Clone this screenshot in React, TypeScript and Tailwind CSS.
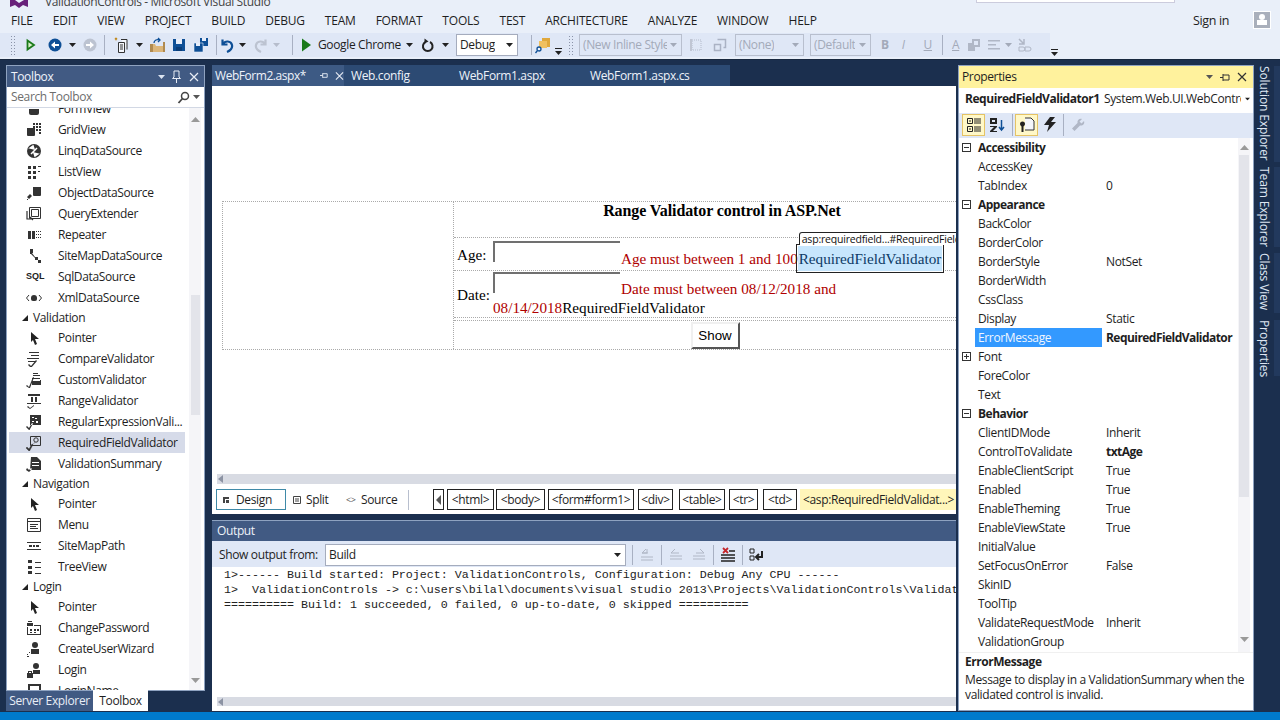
import React from "react";

const UI = "font-['Open_Sans','Noto_Sans',sans-serif] tracking-[-0.36px]";

type IconProps = { className?: string };

const Tri = ({ className = "" }: IconProps) => (
  <svg width="7" height="4" viewBox="0 0 7 4" className={className}>
    <path d="M0 0h7L3.500 4z" fill="currentColor" />
  </svg>
);

const Grip = ({ className = "" }: IconProps) => (
  <div className={`w-[5px] h-[20px] bg-[radial-gradient(#8a93a8_1px,transparent_1px)] bg-[length:3px_3px] ${className}`} />
);

const Sep = ({ className = "" }: IconProps) => <div className={`w-px h-[20px] bg-[#a8b0c2] ${className}`} />;

const Play = ({ className = "", outline = false }: IconProps & { outline?: boolean }) => (
  <svg width="12" height="14" viewBox="0 0 12 14" className={className}>
    {outline ? (
      <path d="M2.500 2.500l6.500 4.500-6.500 4.500z" fill="#d8f0c8" stroke="#1a7a1a" strokeWidth="1.800" />
    ) : (
      <path d="M2 0.500l9 6.500-9 6.500z" fill="#1a7a1a" />
    )}
  </svg>
);

const CircleArrow = ({ className = "", color = "#0e4f96", flip = false }: IconProps & { color?: string; flip?: boolean }) => (
  <svg width="14" height="14" viewBox="0 0 14 14" className={className}>
    <circle cx="7" cy="7" r="6.500" fill={color} />
    <path d={flip ? "M3 6h4V3.500L11 7l-4 3.500V8H3z" : "M11 6H7V3.500L3 7l4 3.500V8h4z"} fill="#fff" />
  </svg>
);

const FolderOpen = ({ className = "" }: IconProps) => (
  <svg width="17" height="16" viewBox="0 0 17 16" className={className}>
    <path d="M1 7h5l1 2h8v6H1z" fill="#dcb67a" />
    <path d="M1 7h3v8H1zM14 5h2v10h-2z" fill="#b08a50" />
    <path d="M5 6c0-3 3-4 6-3M9 1l2 2-2 2" stroke="#0e4f96" strokeWidth="1.300" fill="none" />
  </svg>
);

const Floppy = ({ className = "" }: IconProps) => (
  <svg width="14" height="14" viewBox="0 0 14 14" className={className}>
    <path d="M1 1h12v12H1z" fill="#0e4f96" />
    <path d="M4 1h6v5H4z" fill="#e8eefa" />
    <path d="M4 9h6v4H4z" fill="#0a3d78" />
  </svg>
);

const FloppyAll = ({ className = "" }: IconProps) => (
  <svg width="16" height="16" viewBox="0 0 16 16" className={className}>
    <path d="M7 1h8v8H7z" fill="#0e4f96" />
    <path d="M9 1h4v3H9z" fill="#e8eefa" />
    <path d="M1 6h9v9H1z" fill="#0e4f96" stroke="#e8eefa" strokeWidth="0.600" />
    <path d="M3 6h4v3H3z" fill="#e8eefa" />
  </svg>
);

const NewProject = ({ className = "" }: IconProps) => (
  <svg width="15" height="17" viewBox="0 0 15 17" className={className}>
    <path d="M4.500 5.500h6v10h-6zM7 2.500h6v10" fill="#f4f6fb" stroke="#333" />
    <path d="M1 1l2 2m0-2L1 3" stroke="#c08a20" strokeWidth="1.200" />
    <path d="M6 8h3M6 10h3M6 12h3" stroke="#333" />
  </svg>
);

const Undo = ({ className = "", color = "#0e4f96" }: IconProps & { color?: string }) => (
  <svg width="14" height="15" viewBox="0 0 14 15" className={className}>
    <path d="M2.500 1.500v5h5M3 6C5 2.500 11 2.500 12 7c.6 3-1.500 5.500-5 7" stroke={color} strokeWidth="2.200" fill="none" />
  </svg>
);

const Redo = ({ className = "" }: IconProps) => (
  <svg width="14" height="15" viewBox="0 0 14 15" className={className}>
    <path d="M11.500 1.500v5h-5M11 6C9 2.500 3 2.500 2 7c-.6 3 1.500 5.500 5 7" stroke="#bcc3d1" strokeWidth="2.200" fill="none" />
  </svg>
);

const Refresh = ({ className = "" }: IconProps) => (
  <svg width="14" height="15" viewBox="0 0 14 15" className={className}>
    <path d="M9 4a4.800 4.800 0 1 1-4.500 0" stroke="#222" strokeWidth="2" fill="none" />
    <path d="M3.500 0.500l4 3-4 2z" fill="#222" />
  </svg>
);

const FindFiles = ({ className = "" }: IconProps) => (
  <svg width="16" height="17" viewBox="0 0 16 17" className={className}>
    <path d="M7 1h8v9H7z" fill="#e0a83c" />
    <path d="M4 4h8v7H4z" fill="#f0c060" />
    <circle cx="4" cy="12" r="2" fill="#eef3fb" stroke="#0e4f96" strokeWidth="1.300" />
    <path d="M2.500 13.500L0.500 16" stroke="#0e4f96" strokeWidth="1.300" />
  </svg>
);

const Overflow = ({ className = "" }: IconProps) => (
  <svg width="7" height="7" viewBox="0 0 7 7" className={className}>
    <path d="M0 0h7v1H0zM0 3h7L3.500 7z" fill="#222" />
  </svg>
);

const StyleIcon = ({ className = "" }: IconProps) => (
  <svg width="14" height="14" viewBox="0 0 14 14" className={className}>
    <path d="M3 2h9v10H3z" fill="none" stroke="#b4bbcb" strokeDasharray="1 1" />
    <path d="M1 1h2v12H1z" fill="#c0c6d4" />
  </svg>
);

const CopyFrame = ({ className = "" }: IconProps) => (
  <svg width="14" height="14" viewBox="0 0 14 14" className={className}>
    <path d="M4.500 1.500h8v8h-2M1.500 6.500h6v6h-6z" fill="none" stroke="#aab2c4" strokeWidth="1.500" />
  </svg>
);

const Wrench = ({ className = "" }: IconProps) => (
  <svg width="14" height="14" viewBox="0 0 14 14" className={className}>
    <path d="M13 3l-2.500 2.500L8.500 3.500 11 1C8.500 0 6 2 6.500 5L1 10.500 3.500 13 9 7.500c3 .5 5-2 4-4.500z" fill="#b0b7c6" />
  </svg>
);

// toolbox glyphs, drawn roughly as in the VS 2013 toolbox
const glyphs: Record<string, React.ReactNode> = {
  form: <path d="M3 8h10v4a2 2 0 0 1-2 2H5a2 2 0 0 1-2-2z" fill="#333" />,
  grid: (
    <>
      <path d="M7 1h2v2H7zM10 1h2v2h-2zM13 1h2v2h-2zM7 4h2v2H7zM10 4h2v2h-2zM13 4h2v2h-2zM10 7h2v2h-2zM13 7h2v2h-2zM13 10h2v2h-2z" fill="#333" />
      <path d="M1 6h8v7a1 1 0 0 1-1 1H2a1 1 0 0 1-1-1z" fill="#333" />
    </>
  ),
  linq: (
    <>
      <circle cx="8" cy="8" r="7" fill="#333" />
      <path d="M4 5l3-2 1 3zM12 11l-3 2-1-3zM5 11l6-6" stroke="#fff" strokeWidth="1.500" fill="#fff" />
    </>
  ),
  list: <path d="M2 2h3v3H2zM7 2h3v3H7zM12 2h3v1h-3zM2 7h3v3H2zM7 7h3v3H7zM12 7h2v1h-2zM2 12h3v3H2zM7 12h3v3H7z" fill="#333" />,
  object: (
    <>
      <path d="M7 2h8v8a1 1 0 0 1-1 1H8a1 1 0 0 1-1-1z" fill="#333" />
      <path d="M1 12l3-3 2 2-3 3zM1 14h1v1H1z" fill="#333" />
    </>
  ),
  query: (
    <>
      <path d="M3.500 1.500h11v11h-11z" fill="none" stroke="#333" />
      <path d="M5.500 3.500h7v7h-7z" fill="none" stroke="#333" />
      <path d="M1 5v8h5M4 11l3 3" stroke="#333" fill="none" strokeWidth="1.200" />
    </>
  ),
  repeater: <path d="M2 4h3v8H2zM6 4h3v8H6zM10 4h1v1h-1zM12 4h1v1h-1zM14 4h1v1h-1zM10 7h1v1h-1zM12 7h1v1h-1zM14 7h1v1h-1zM10 10h1v1h-1zM12 10h1v1h-1zM14 10h1v1h-1z" fill="#333" />,
  sitemap: <path d="M4 1h3v4H6l3 4h3v3H9v-2L5 6H4zM12 12h3v3h-3z" fill="#333" />,
  xml: (
    <>
      <path d="M5 8a3 3 0 0 1 6 0v1a2 2 0 0 1-2 2H7a2 2 0 0 1-2-2z" fill="#333" />
      <path d="M3 5L0.500 8 3 11M13 5l2.500 3L13 11" stroke="#333" fill="none" />
    </>
  ),
  pointer: <path d="M5 2l8 7H9l2 5-2 1-2-5-2 2z" fill="#222" />,
  compare: <path d="M3 1h10v1H3zM5 4h8v1H5zM1 7h12v1H1zM2 10h7v1H2zM3 13l2 2 5-6 1 1-6 7-3-3z" fill="#333" />,
  custom: <path d="M7 1h5v1H7zM7 3h7v1H7zM6 6h8v1H6zM6 8h9v5H6V9h8V8zM1 13l2 2 4-10 1 .5L4 16H3l-3-2z" fill="#333" />,
  range: <path d="M2 1h12v2H2zM5 4h2v5H5zM9 4h2v5H9zM1 10h14v1H1zM2 13l2 2 4-3v1l-4 3-3-2z" fill="#333" />,
  regex: <path d="M4 1h11v10H4zM6 3v1h2V3zM9 4v1h2V4zM6 7v1h2V7zM10 7v2h2V7zM1 12l2 2 3-5 1 .5L3.500 16H3l-3-3z" fill="#333" fillRule="evenodd" />,
  required: (
    <>
      <path d="M4.500 1.500h10v9h-10z" fill="none" stroke="#333" />
      <circle cx="10" cy="5" r="2.200" fill="none" stroke="#333" />
      <path d="M9 7l-1.500 2M1 12l2 2 3-5 1 .5L3.500 16H3l-3-3z" fill="#333" stroke="#333" strokeWidth="0.400" />
    </>
  ),
  summary: <path d="M5 1h6l4 4v9H4zM6 6v1h7V6zM6 9v1h7V9zM1 12l2 2 2-2 1 1-3 3-3-2z" fill="#333" fillRule="evenodd" />,
  menu: (
    <>
      <path d="M1.500 1.500h13v13h-13z" fill="none" stroke="#333" />
      <path d="M1 4h14v1H1zM4 7h8v1H4zM4 9h6v1H4zM4 11h8v1H4z" fill="#333" />
    </>
  ),
  path: <path d="M1 4h14v1H1zM1 11h14v1H1zM3 7h3v2H3zM7 7h2v2H7zM10 7h3v2h-3z" fill="#333" />,
  tree: <path d="M2 1h4v3H2zM9 3h6v1H9zM2 7h4v3H2zM9 8h6v1H9zM2 12h4v3H2zM9 14h6v1H9z" fill="#333" />,
  password: <path d="M2 1h4v1H2zM1 3h6v3H1zM8 5h7v10H1V7h1v7h12V6H8zM4 9h2v2H4zM8 9h2v2H8zM11 9h2v2h-2zM4 12h2v1H4zM8 12h2v1H8z" fill="#333" />,
  wizard: (
    <>
      <circle cx="9" cy="4" r="3" fill="#333" />
      <path d="M5 8h8v5H5zM1 13h1v1H1zM3 11h1v1H3zM1 15h2v1H1z" fill="#333" />
    </>
  ),
  login: (
    <>
      <circle cx="10" cy="4" r="3" fill="#333" />
      <path d="M7 8h7v4H7zM1 11h6v5H1zM2 9h4v2H5v-1H3v1H2z" fill="#333" />
    </>
  ),
  loginname: <path d="M2 1h13v9H2zM4 3v5h9V3z" fill="#333" fillRule="evenodd" />,
};

const Glyph = ({ name }: { name: string }) =>
  name === "sql" ? (
    <span className="font-['Liberation_Sans',sans-serif] font-bold text-[9px] tracking-normal leading-none text-[#222] w-[16px] text-center">SQL</span>
  ) : (
    <svg width="16" height="16" viewBox="0 0 16 16">
      {glyphs[name]}
    </svg>
  );

const ToolRow = ({ icon, label, selected = false }: { icon: string; label: string; selected?: boolean }) => (
  <div className={`flex items-center h-[21px] ml-[2px] w-[176px] ${selected ? "bg-[#d6dbe9]" : ""}`}>
    <div className="w-[16px] ml-[17px] mr-[16px] flex justify-center">
      <Glyph name={icon} />
    </div>
    <span className="whitespace-nowrap">{label}</span>
  </div>
);

const GroupRow = ({ label }: { label: string }) => (
  <div className="flex items-center h-[19px] pl-[14px]">
    <svg width="8" height="8" viewBox="0 0 8 8" className="mr-[4px]">
      <path d="M7 1v6H1z" fill="#222" />
    </svg>
    <span>{label}</span>
  </div>
);

const PlusBox = ({ plus = false }: { plus?: boolean }) => (
  <div className="w-[9px] h-[9px] ml-[3px] mr-[7px] border border-[#333] relative shrink-0">
    <div className="absolute left-[1px] top-[3px] w-[5px] h-px bg-[#333]" />
    {plus && <div className="absolute left-[3px] top-[1px] w-px h-[5px] bg-[#333]" />}
  </div>
);

const PropGroup = ({ label }: { label: string }) => (
  <div className="flex items-center h-[19px]">
    <PlusBox />
    <span className="font-bold tracking-[-0.5px]">{label}</span>
  </div>
);

const PropRow = ({ name, value, bold = false, sel = false, plus = false }: { name: string; value?: string; bold?: boolean; sel?: boolean; plus?: boolean }) => (
  <div className="flex items-center h-[19px]">
    {plus ? <PlusBox plus /> : <div className="w-[19px] shrink-0" />}
    <div className={`-ml-[3px] pl-[3px] w-[127px] h-[19px] leading-[19px] whitespace-nowrap shrink-0 ${sel ? "bg-[#3399ff] text-[#f0f6ff]" : ""}`}>{name}</div>
    <div className={`ml-[4px] whitespace-nowrap ${bold ? "font-bold tracking-[-0.55px]" : ""}`}>{value}</div>
  </div>
);

const Crumb = ({ label, className = "" }: { label: string; className?: string }) => (
  <div className={`h-[21px] border border-[#222] flex items-center justify-center whitespace-nowrap bg-white shrink-0 ${className}`}>{label}</div>
);

const Combo = ({ label, className = "", grey = false }: { label: string; className?: string; grey?: boolean }) => (
  <div className={`h-[22px] border flex items-center justify-between pl-[3px] pr-[4px] shrink-0 ${grey ? "border-[#b8bfce] text-[#a3aab9] bg-[#dfe7f6]" : "border-[#a5acbd] bg-white"} ${className}`}>
    <span className="whitespace-nowrap overflow-hidden">{label}</span>
    <Tri className={grey ? "ml-[3px] text-[#a3aab9] shrink-0" : "ml-[3px] text-[#222] shrink-0"} />
  </div>
);

const SideTab = ({ label, className = "" }: { label: string; className?: string }) => (
  <div className={`flex w-full pl-[1px] ${className}`}>
    <div className="[writing-mode:vertical-rl] whitespace-nowrap tracking-[-0.1px]">{label}</div>
    <div className="ml-auto w-[6px] bg-[#22395d]" />
  </div>
);

export default function App() {
  const menu = ["FILE", "EDIT", "VIEW", "PROJECT", "BUILD", "DEBUG", "TEAM", "FORMAT", "TOOLS", "TEST", "ARCHITECTURE", "ANALYZE", "WINDOW", "HELP"];

  return (
    <div className={`w-[1280px] h-[720px] overflow-hidden flex flex-col bg-[#1b2f4e] text-[12px] text-[#1e1e1e] ${UI}`}>
      {/* title + menu */}
      <div className="h-[33px] bg-[#e9eff9] relative shrink-0">
        <svg width="24" height="8" viewBox="0 0 24 8" className="absolute left-[10px] top-0">
          <path d="M0 0h5l4 3 5-3h4v7l-5-2-4 3-4-3-5 2z" fill="#68217a" />
        </svg>
        <div className="absolute left-[45px] -top-[7px] whitespace-nowrap text-[#444]">ValidationControls - Microsoft Visual Studio</div>
        <div className="absolute left-[976px] -top-[8px] w-[199px] h-[11px] bg-white border border-[#ccd]" />
        <div className="flex items-center h-[33px] pt-[8px] pl-[11px] gap-[20px] tracking-[-0.2px]">
          {menu.map((m) => (
            <span key={m}>{m}</span>
          ))}
          <div className="flex-1" />
          <span className="mr-[4px] mt-[2px] text-[12.5px] tracking-[-0.36px]">Sign in</span>
          <div className="w-[18px] h-[18px] mr-[9px] mt-[-2px] bg-[#a9afbb] flex flex-col items-center pt-[2px] border border-white">
            <div className="w-[6px] h-[6px] rounded-full bg-white" />
            <div className="w-[10px] h-[5px] bg-white" />
          </div>
        </div>
      </div>

      {/* toolbar */}
      <div className="h-[26px] bg-[#e9eff9] flex items-center shrink-0 pb-[2px]">
        <div className="w-[1050px] h-[24px] bg-[#dfe7f6] flex items-center">
          <Grip className="ml-[10px]" />
          <Play className="ml-[10px]" outline />
          <CircleArrow className="ml-[11px]" />
          <Tri className="ml-[7px] text-[#222]" />
          <CircleArrow className="ml-[7px]" color="#bcc3d1" flip />
          <Sep className="ml-[7px]" />
          <NewProject className="ml-[9px]" />
          <Tri className="ml-[7px] text-[#222]" />
          <FolderOpen className="ml-[6px]" />
          <Floppy className="ml-[6px]" />
          <FloppyAll className="ml-[7px]" />
          <Sep className="ml-[7px]" />
          <Undo className="ml-[3px]" />
          <Tri className="ml-[5px] text-[#222]" />
          <Redo className="ml-[8px]" />
          <Tri className="ml-[5px] text-[#b6bdcc]" />
          <Sep className="ml-[12px]" />
          <Play className="ml-[7px]" />
          <span className="ml-[6px] whitespace-nowrap w-[84px]">Google Chrome</span>
          <Tri className="ml-[4px] text-[#222]" />
          <Refresh className="ml-[8px]" />
          <Tri className="ml-[7px] text-[#222]" />
          <Combo label="Debug" className="ml-[7px] w-[62px]" />
          <Sep className="ml-[13px]" />
          <FindFiles className="ml-[3px]" />
          <Overflow className="ml-[4px] mt-[13px]" />
          <Grip className="ml-[6px]" />
          <Combo grey label="(New Inline Style" className="ml-[6px] w-[103px]" />
          <StyleIcon className="ml-[7px]" />
          <CopyFrame className="ml-[10px]" />
          <Combo grey label="(None)" className="ml-[8px] w-[69px]" />
          <Combo grey label="(Default" className="ml-[6px] w-[61px]" />
          <span className="ml-[10px] font-bold text-[#a3aab9]">B</span>
          <span className="ml-[13px] italic text-[#a3aab9]">I</span>
          <span className="ml-[19px] underline text-[#a3aab9]">U</span>
          <Sep className="ml-[10px]" />
          <span className="ml-[9px] underline text-[#a3aab9]">A</span>
          <svg width="14" height="14" viewBox="0 0 14 14" className="ml-[8px]">
            <path d="M5 1h8v8H5zM1 5h7v8H1z" fill="#b0b7c6" />
            <path d="M7 3h4v4H7z" fill="#dfe7f6" />
          </svg>
          <svg width="14" height="14" viewBox="0 0 14 14" className="ml-[6px]">
            <path d="M1 2h12v1.500H1zM1 6h8v1.500H1zM1 10h12v1.500H1z" fill="#b0b7c6" />
          </svg>
          <Tri className="ml-[4px] text-[#a3aab9]" />
          <svg width="15" height="15" viewBox="0 0 15 15" className="ml-[5px]">
            <path d="M2 1l5 5M7 1v5H2" stroke="#b0b7c6" fill="none" strokeWidth="1.500" />
            <path d="M2 9h4a2 2 0 0 1 0 4H2zM8 9h4a2 2 0 0 1 0 4H8z" stroke="#b0b7c6" fill="none" />
          </svg>
        </div>
        <Overflow className="ml-[1px] mt-[14px]" />
      </div>

      {/* body */}
      <div className="flex-1 flex min-h-0 pt-[5px] bg-[#1b2f4e] border-t border-[#18283f]">
        {/* toolbox */}
        <div className="w-[199px] ml-[6px] shrink-0 flex flex-col h-[646px]">
          <div className="flex-1 flex flex-col min-h-0 border border-[#8ea2c0] overflow-hidden bg-white">
            <div className="h-[21px] bg-[#415a83] text-[#f0f4fb] flex items-center pl-[4px] shrink-0">
              <span>Toolbox</span>
              <Tri className="ml-auto text-[#dce4f1]" />
              <svg width="11" height="13" viewBox="0 0 11 13" className="ml-[6px]">
                <path d="M3 1h5v6l1.500 1.500h-8L3 7zM5.500 8.500V13" stroke="#e8edf6" fill="none" />
              </svg>
              <svg width="10" height="10" viewBox="0 0 10 10" className="ml-[7px] mr-[5px]">
                <path d="M1 1l8 8M9 1L1 9" stroke="#e8edf6" strokeWidth="1.200" />
              </svg>
            </div>
            <div className="h-[21px] flex items-center pl-[4px] text-[#6d6d6d] border-b border-[#d2d8e4] shrink-0">
              <span>Search Toolbox</span>
              <svg width="13" height="13" viewBox="0 0 13 13" className="ml-auto">
                <circle cx="8" cy="5" r="3.500" fill="none" stroke="#444" strokeWidth="1.500" />
                <path d="M5.500 7.500L1.500 12" stroke="#444" strokeWidth="1.800" />
              </svg>
              <Tri className="ml-[3px] mr-[4px] text-[#555]" />
            </div>
            <div className="flex-1 flex min-h-0">
              <div className="w-[180px] shrink-0 overflow-hidden">
                <div className="h-[11px] overflow-hidden">
                  <div className="-mt-[10px]">
                    <ToolRow icon="form" label="FormView" />
                  </div>
                </div>
                <ToolRow icon="grid" label="GridView" />
                <ToolRow icon="linq" label="LinqDataSource" />
                <ToolRow icon="list" label="ListView" />
                <ToolRow icon="object" label="ObjectDataSource" />
                <ToolRow icon="query" label="QueryExtender" />
                <ToolRow icon="repeater" label="Repeater" />
                <ToolRow icon="sitemap" label="SiteMapDataSource" />
                <ToolRow icon="sql" label="SqlDataSource" />
                <ToolRow icon="xml" label="XmlDataSource" />
                <GroupRow label="Validation" />
                <ToolRow icon="pointer" label="Pointer" />
                <ToolRow icon="compare" label="CompareValidator" />
                <ToolRow icon="custom" label="CustomValidator" />
                <ToolRow icon="range" label="RangeValidator" />
                <ToolRow icon="regex" label="RegularExpressionVali..." />
                <ToolRow icon="required" label="RequiredFieldValidator" selected />
                <ToolRow icon="summary" label="ValidationSummary" />
                <GroupRow label="Navigation" />
                <ToolRow icon="pointer" label="Pointer" />
                <ToolRow icon="menu" label="Menu" />
                <ToolRow icon="path" label="SiteMapPath" />
                <ToolRow icon="tree" label="TreeView" />
                <GroupRow label="Login" />
                <ToolRow icon="pointer" label="Pointer" />
                <ToolRow icon="password" label="ChangePassword" />
                <ToolRow icon="wizard" label="CreateUserWizard" />
                <ToolRow icon="login" label="Login" />
                <ToolRow icon="loginname" label="LoginName" />
              </div>
              <div className="w-[12px] ml-[2px] bg-[#f5f5f8] flex flex-col items-center relative">
                <svg width="9" height="5" viewBox="0 0 9 5" className="mt-[9px]">
                  <path d="M4.500 0L9 5H0z" fill="#999" />
                </svg>
                <div className="absolute left-[2px] top-[187px] w-[9px] h-[120px] bg-[#e3e4ea]" />
                <svg width="9" height="5" viewBox="0 0 9 5" className="mt-auto mb-[7px]">
                  <path d="M4.500 5L9 0H0z" fill="#999" />
                </svg>
              </div>
            </div>
          </div>
          <div className="flex h-[21px] shrink-0 -mt-px">
            <div className="w-[87px] bg-[#415a83] text-[#e8edf6] flex items-center justify-center mt-[1px] whitespace-nowrap">Server Explorer</div>
            <div className="w-[55px] bg-white flex items-center justify-center whitespace-nowrap">Toolbox</div>
          </div>
        </div>

        {/* center */}
        <div className="w-[744px] ml-[7px] shrink-0 flex flex-col">
          <div className="h-[21px] flex items-center text-[#eef2fa] shrink-0">
            <div className="w-[132px] h-full bg-[#3d5a84] flex items-center pl-[3px]">
              <span className="w-[92px] whitespace-nowrap tracking-[-0.45px]">WebForm2.aspx*</span>
              <svg width="9" height="9" viewBox="0 0 9 9" className="ml-[14px]">
                <path d="M3 2v5M3 4.500H0M3 2.500h5v4H3" stroke="#e8edf6" fill="none" />
              </svg>
              <svg width="10" height="10" viewBox="0 0 10 10" className="ml-[7px]">
                <path d="M1 1l8 8M9 1L1 9" stroke="#e8edf6" strokeWidth="1.200" />
              </svg>
            </div>
            <div className="w-[386px] h-full bg-[#2c4a73] flex items-center whitespace-nowrap">
              <span className="ml-[7px] w-[61px]">Web.config</span>
              <span className="ml-[47px] w-[85px]">WebForm1.aspx</span>
              <span className="ml-[46px]">WebForm1.aspx.cs</span>
            </div>
          </div>

          {/* design surface */}
          <div className="h-[388px] bg-white shrink-0 pt-[115px] pl-[10px] overflow-hidden">
            <div className="flex w-[760px] h-[149px] border border-dotted border-[#aaa] font-['Liberation_Serif',serif] text-[15.2px] tracking-normal leading-[19px] text-black">
              <div className="w-[231px] shrink-0 border-r border-dotted border-[#aaa]" />
              <div className="flex-1 flex flex-col">
                <div className="h-[37px] w-[536px] text-center font-bold border-b border-dotted border-[#aaa] text-[16px] tracking-[-0.1px] leading-[18px]">Range Validator control in ASP.Net</div>
                <div className="h-[32px] flex items-center border-b border-dotted border-[#aaa] mt-px pl-[3px]">
                  <span className="w-[36px] shrink-0">Age:</span>
                  <div className="relative whitespace-nowrap mt-[3px]">
                    <span className="inline-block w-[127px] h-[21px] border-t-2 border-l-2 border-[#707070] align-[2px]" />
                    <span className="text-[#b00000] ml-px">Age must between 1 and 100</span>
                    <span className="relative inline-block bg-[#c7e6fd] text-[#0d3a66] outline-1 outline-[#222] outline-offset-[1px] py-[3px] px-[1px]">
                      RequiredFieldValidator
                      <span className="absolute left-[1px] -top-[14px] h-[13px] w-[158px] overflow-hidden bg-white border border-[#222] border-b-0 rounded-tl-[3px] font-['Open_Sans',sans-serif] text-[10.5px] tracking-[-0.2px] leading-[12px] pl-[2px] text-[#111] whitespace-nowrap">asp:requiredfield...#RequiredFieldValidator1</span>
                    </span>
                  </div>
                </div>
                <div className="h-[48px] flex items-center border-b border-dotted border-[#aaa] mt-px pl-[3px]">
                  <span className="w-[36px] shrink-0 mt-[1px]">Date:</span>
                  <div className="w-[352px]">
                    <span className="inline-block w-[127px] h-[21px] border-t-2 border-l-2 border-[#707070] align-[1px]" />
                    <span className="text-[#b00000] ml-px">Date must between 08/12/2018 and 08/14/2018</span>
                    <span>RequiredFieldValidator</span>
                  </div>
                </div>
                <div className="flex-1 mt-[2px] w-[522px] flex justify-center items-start border-t border-dotted border-[#aaa]">
                  <div className="w-[49px] h-[27px] mt-px border-2 border-[#f0f0f0] border-r-[#555] border-b-[#555] flex items-center justify-center font-['Liberation_Sans',sans-serif] text-[13.33px]">Show</div>
                </div>
              </div>
            </div>
          </div>

          {/* design bar */}
          <div className="bg-white shrink-0 h-[40px] flex flex-col">
            <div className="h-[10px] ml-[5px] flex items-center bg-[#d8dbe3] shrink-0">
              <div className="w-0 h-0 border-y-[4px] border-y-transparent border-r-[5px] border-r-[#8c93a3] ml-[1px]" />
            </div>
            <div className="flex items-center h-[21px] mt-[5px] pl-[4px]">
              <div className="w-[70px] h-[21px] border border-[#3f8aa8] flex items-center pl-[5px] shrink-0">
                <svg width="8" height="8" viewBox="0 0 8 8" className="mr-[6px]">
                  <path d="M1 1h6v2H3v4H1zM4 4h3v3H4z" fill="#444" />
                </svg>
                <span>Design</span>
              </div>
              <svg width="8" height="8" viewBox="0 0 8 8" className="ml-[7px] shrink-0">
                <path d="M.5.500h7v7h-7zM2 3h4M2 5h4" stroke="#444" fill="none" />
              </svg>
              <span className="ml-[5px] w-[24px] shrink-0">Split</span>
              <span className="ml-[16px] w-[10px] text-[9px] text-[#555] shrink-0">&lt;&gt;</span>
              <span className="ml-[5px] w-[37px] shrink-0">Source</span>
              <div className="w-px h-[20px] bg-[#b8bfce] ml-[10px] shrink-0" />
              <div className="ml-[24px] w-[11px] h-[21px] border border-[#222] flex items-center justify-center shrink-0">
                <div className="w-0 h-0 border-y-[5px] border-y-transparent border-r-[5px] border-r-[#555]" />
              </div>
              <Crumb label="<html>" className="ml-[3px] w-[47px]" />
              <Crumb label="<body>" className="ml-[2px] w-[49px]" />
              <Crumb label="<form#form1>" className="ml-[3px] w-[86px]" />
              <Crumb label="<div>" className="ml-[4px] w-[35px]" />
              <Crumb label="<table>" className="ml-[6px] w-[46px]" />
              <Crumb label="<tr>" className="ml-[4px] w-[29px]" />
              <Crumb label="<td>" className="ml-[5px] w-[34px]" />
              <div className="ml-[3px] flex-1 h-[21px] bg-[#fff6ba] flex items-center pl-[3px] whitespace-nowrap overflow-hidden">&lt;asp:RequiredFieldValidat...&gt;</div>
            </div>
          </div>

          {/* output */}
          <div className="h-[6px] shrink-0" />
          <div className="h-[191px] shrink-0 flex flex-col bg-white">
            <div className="h-[21px] bg-[#415a83] text-[#eef2fa] flex items-center pl-[5px] border-t border-[#8ea2c0] shrink-0">Output</div>
            <div className="h-[26px] bg-[#dfe7f6] flex items-center pl-[7px] pt-[1px] shrink-0">
              <span className="w-[99px] whitespace-nowrap">Show output from:</span>
              <Combo label="Build" className="ml-[7px] w-[301px]" />
              <Sep className="ml-[6px]" />
              <svg width="14" height="14" viewBox="0 0 14 14" className="ml-[7px]">
                <path d="M6 1L2 5h5V1M2 5h6M1 9h12M1 12h12" stroke="#b0b7c6" fill="none" />
              </svg>
              <Sep className="ml-[7px]" />
              <svg width="14" height="14" viewBox="0 0 14 14" className="ml-[7px]">
                <path d="M6 1L2 5h8M1 8h12M1 11h12" stroke="#b0b7c6" fill="none" />
              </svg>
              <svg width="14" height="14" viewBox="0 0 14 14" className="ml-[9px]">
                <path d="M8 1l4 4H4M1 8h12M1 11h12" stroke="#b0b7c6" fill="none" />
              </svg>
              <Sep className="ml-[7px]" />
              <svg width="14" height="16" viewBox="0 0 14 16" className="ml-[7px]">
                <path d="M2 1l5 5M7 1L2 6" stroke="#c4262b" strokeWidth="1.800" />
                <path d="M8 4h6M0 8h14M0 11h14M0 14h14" stroke="#222" strokeWidth="1.500" />
              </svg>
              <Sep className="ml-[7px]" />
              <svg width="15" height="14" viewBox="0 0 15 14" className="ml-[6px]">
                <path d="M1 1h4v4H1zM1 8h4v4H1z" fill="none" stroke="#222" />
                <path d="M13 3v6H8M10 6l-3 3 3 3" stroke="#222" strokeWidth="2" fill="none" />
              </svg>
            </div>
            <div className="flex-1 min-h-0 overflow-hidden pl-[12px] pt-px font-['Liberation_Mono',monospace] text-[11.67px] tracking-normal leading-[15px] whitespace-pre text-[#222]">
              {"1>------ Build started: Project: ValidationControls, Configuration: Debug Any CPU ------\n1>  ValidationControls -> c:\\users\\bilal\\documents\\visual studio 2013\\Projects\\ValidationControls\\ValidationControls\\bin\\ValidationControls.dll\n========== Build: 1 succeeded, 0 failed, 0 up-to-date, 0 skipped =========="}
            </div>
            <div className="h-[9px] mb-[5px] ml-[5px] bg-[#d8dbe3] flex items-center shrink-0">
              <div className="w-0 h-0 border-y-[4px] border-y-transparent border-r-[5px] border-r-[#8c93a3] ml-[1px]" />
            </div>
          </div>
        </div>

        {/* properties */}
        <div className="w-[296px] ml-[2px] shrink-0 h-[646px] border border-[#8ea2c0] bg-white flex flex-col">
          <div className="h-[22px] bg-[#fff29d] flex items-center pl-[3px] shrink-0">
            <span>Properties</span>
            <Tri className="ml-auto text-[#555]" />
            <svg width="10" height="9" viewBox="0 0 10 9" className="ml-[7px]">
              <path d="M3 1v7M3 4.500H0M3 2h6v5H3" stroke="#333" fill="none" />
            </svg>
            <svg width="10" height="10" viewBox="0 0 10 10" className="ml-[7px] mr-[6px]">
              <path d="M1 1l8 8M9 1L1 9" stroke="#333" strokeWidth="1.200" />
            </svg>
          </div>
          <div className="h-[25px] flex items-center pl-[6px] pb-[3px] shrink-0 whitespace-nowrap">
            <span className="font-bold w-[134px] tracking-[-0.45px]">RequiredFieldValidator1</span>
            <span className="ml-[5px] w-[137px] overflow-hidden">System.Web.UI.WebControls.RequiredFieldValidator</span>
            <Tri className="ml-[3px] text-[#222] scale-75" />
          </div>
          <div className="h-[25px] bg-[#dfe7f6] flex items-center pl-[3px] pb-[2px] shrink-0">
            <div className="w-[23px] h-[22px] bg-[#fff8c8] border border-[#e5c365] flex items-center justify-center">
              <svg width="14" height="14" viewBox="0 0 14 14">
                <path d="M.5.500h5v5h-5zM.5 8.500h5v5h-5zM7 1h7M7 3h7M7 5h7M7 9h7M7 11h7M7 13h7M2 3h2M2 11h2" stroke="#222" fill="none" />
              </svg>
            </div>
            <svg width="16" height="16" viewBox="0 0 16 16" className="ml-[4px]">
              <path d="M1 1h7v6H1zM3 5V3h3v2M1 9h7v1L4 14h4v1H1v-1l4-4H1z" fill="#222" fillRule="evenodd" />
              <path d="M12.500 3v10M10 10l2.500 3 2.500-3" stroke="#0e4f96" strokeWidth="1.500" fill="none" />
            </svg>
            <div className="w-px h-[22px] bg-[#a8b0c2] ml-[7px]" />
            <div className="w-[23px] h-[22px] ml-[2px] bg-[#fff8c8] border border-[#e5c365] flex items-center justify-center">
              <svg width="16" height="16" viewBox="0 0 16 16">
                <path d="M6 1h6l3 3v9H6" fill="#f4f6fb" stroke="#333" />
                <path d="M1 7a2.500 2.500 0 0 1 5 0c0 1-1 2-1.500 2.500V15h-2V9.500C2 9 1 8 1 7z" fill="#222" />
              </svg>
            </div>
            <svg width="13" height="15" viewBox="0 0 13 15" className="ml-[5px]">
              <path d="M7 0h5L8 5h5L4 15l2-7H1z" fill="#222" />
            </svg>
            <div className="w-px h-[22px] bg-[#a8b0c2] ml-[7px]" />
            <Wrench className="ml-[7px]" />
          </div>

          <div className="flex-1 min-h-0 flex">
            <div className="w-[279px] shrink-0 h-[514px] overflow-hidden">
              <PropGroup label="Accessibility" />
              <PropRow name="AccessKey" />
              <PropRow name="TabIndex" value="0" />
              <PropGroup label="Appearance" />
              <PropRow name="BackColor" />
              <PropRow name="BorderColor" />
              <PropRow name="BorderStyle" value="NotSet" />
              <PropRow name="BorderWidth" />
              <PropRow name="CssClass" />
              <PropRow name="Display" value="Static" />
              <PropRow name="ErrorMessage" value="RequiredFieldValidator" bold sel />
              <PropRow name="Font" plus />
              <PropRow name="ForeColor" />
              <PropRow name="Text" />
              <PropGroup label="Behavior" />
              <PropRow name="ClientIDMode" value="Inherit" />
              <PropRow name="ControlToValidate" value="txtAge" bold />
              <PropRow name="EnableClientScript" value="True" />
              <PropRow name="Enabled" value="True" />
              <PropRow name="EnableTheming" value="True" />
              <PropRow name="EnableViewState" value="True" />
              <PropRow name="InitialValue" />
              <PropRow name="SetFocusOnError" value="False" />
              <PropRow name="SkinID" />
              <PropRow name="ToolTip" />
              <PropRow name="ValidateRequestMode" value="Inherit" />
              <PropRow name="ValidationGroup" />
            </div>
            <div className="w-[12px] h-[514px] bg-[#f5f5f8] relative flex flex-col items-center">
              <svg width="9" height="5" viewBox="0 0 9 5" className="mt-[7px]">
                <path d="M4.500 0L9 5H0z" fill="#999" />
              </svg>
              <div className="absolute left-[1px] top-[17px] w-[10px] h-[342px] bg-[#e3e4ea]" />
              <svg width="9" height="5" viewBox="0 0 9 5" className="mt-auto mb-[10px]">
                <path d="M4.500 5L9 0H0z" fill="#999" />
              </svg>
            </div>
          </div>
          <div className="h-[58px] shrink-0 pl-[6px] pt-[1px] leading-[16px] border-t border-[#f0f0f0]">
            <div className="font-bold mb-[2px] tracking-[-0.45px]">ErrorMessage</div>
            <div className="leading-[15px] whitespace-nowrap">
              Message to display in a ValidationSummary when the
              <br />
              validated control is invalid.
            </div>
          </div>
        </div>

        {/* right side tabs */}
        <div className="flex-1 flex flex-col items-start text-[#dfe6f2] leading-[16px] pl-[1px]">
          <SideTab label="Solution Explorer" className="h-[96px] mt-[1px]" />
          <SideTab label="Team Explorer" className="h-[80px] mt-[5px]" />
          <SideTab label="Class View" className="h-[60px] mt-[6px]" />
          <SideTab label="Properties" className="h-[56px] mt-[7px]" />
        </div>
      </div>

      <div className="h-[8px] shrink-0 bg-[#007acc]" />
    </div>
  );
}
